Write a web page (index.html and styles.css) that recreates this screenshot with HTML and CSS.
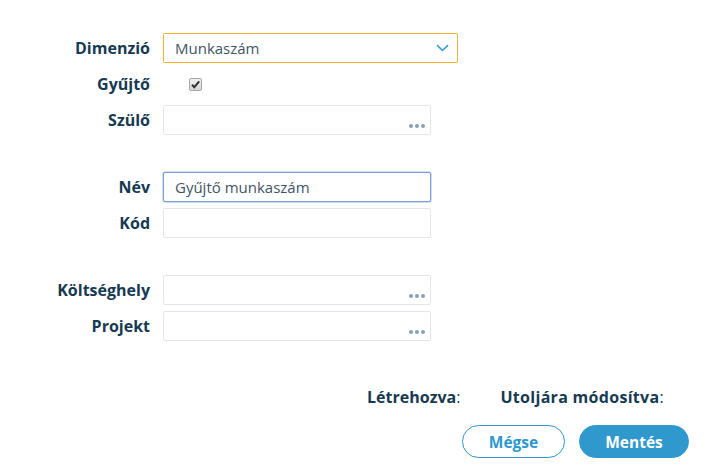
FILE: index.html
```html
<!DOCTYPE html>
<html lang="hu">
<head>
<meta charset="utf-8">
<title>Dimenzió</title>
<link rel="stylesheet" href="styles.css">
</head>
<body>
<div class="page">
  <form class="form">
    <div class="section">
      <label class="label">Dimenzió</label>
      <div class="field select">
        <span class="value">Munkaszám</span>
        <svg class="chevron" width="13" height="8" viewBox="0 0 13 8"><path d="M1 1.2 L6.5 6.5 L12 1.2" fill="none" stroke="#3a9bd5" stroke-width="1.6"/></svg>
      </div>
      <label class="label">Gyűjtő</label>
      <div class="check-cell">
        <span class="checkbox"><svg width="11" height="11" viewBox="0 0 11 11"><path d="M2 5.8 L4.3 8.2 L9.2 2.4" fill="none" stroke="#333" stroke-width="2"/></svg></span>
      </div>
      <label class="label">Szülő</label>
      <div class="field lookup"><span class="dots"><i></i><i></i><i></i></span></div>
    </div>

    <div class="section">
      <label class="label">Név</label>
      <div class="field focused"><span class="value">Gyűjtő munkaszám</span></div>
      <label class="label">Kód</label>
      <div class="field"></div>
    </div>

    <div class="section">
      <label class="label">Költséghely</label>
      <div class="field lookup"><span class="dots"><i></i><i></i><i></i></span></div>
      <label class="label">Projekt</label>
      <div class="field lookup"><span class="dots"><i></i><i></i><i></i></span></div>
    </div>
  </form>

  <div class="meta">
    <span class="meta-item"><b>Létrehozva</b>:</span>
    <span class="meta-item"><b>Utoljára módosítva</b>:</span>
  </div>

  <div class="actions">
    <button class="btn btn-outline" type="button">Mégse</button>
    <button class="btn btn-primary" type="button">Mentés</button>
  </div>
</div>
</body>
</html>
```

FILE: styles.css
```css
* { box-sizing: border-box; }
html, body {
  margin: 0;
  padding: 0;
  background: #ffffff;
}
body {
  font-family: "Open Sans", "Noto Sans", sans-serif;
  color: #163a52;
}
.page {
  width: 705px;
  height: 471px;
  padding-top: 33px;
}
.form {
  display: flex;
  flex-direction: column;
  gap: 37px;
}
.section {
  display: grid;
  grid-template-columns: 150px 295px;
  column-gap: 13px;
  row-gap: 6px;
  grid-auto-rows: 30px;
  align-items: center;
}
.label {
  text-align: right;
  font-weight: 700;
  font-size: 16px;
  color: #163a52;
  line-height: 30px;
}
.field {
  height: 30px;
  width: 268px;
  border: 1px solid #e2e6ea;
  border-radius: 2px;
  background: #fff;
  position: relative;
  display: flex;
  align-items: center;
  padding-left: 11px;
}
.value {
  font-size: 15px;
  color: #3f5566;
}
.select {
  width: 295px;
  border-color: #f2b230;
  justify-content: space-between;
  padding-right: 8px;
}
.focused {
  border-color: #7e9fd3;
  box-shadow: 0 0 0 0.5px #a8bfe4;
}
.check-cell {
  height: 30px;
  display: flex;
  align-items: center;
  padding-left: 26px;
}
.checkbox {
  width: 13px;
  height: 13px;
  border: 1px solid #a5a5a5;
  border-radius: 2px;
  background: linear-gradient(#f2f2f2, #d6d6d6);
  display: flex;
  align-items: center;
  justify-content: center;
}
.dots {
  position: absolute;
  right: 5px;
  bottom: 6px;
  display: flex;
  gap: 2px;
}
.dots i {
  width: 4px;
  height: 4px;
  border-radius: 50%;
  background: #8a9fb8;
  display: block;
}
.meta {
  display: flex;
  justify-content: flex-end;
  gap: 40px;
  padding-right: 41px;
  margin-top: 45px;
  font-size: 16px;
  line-height: 22px;
  color: #163a52;
}
.meta b { font-weight: 700; }
.meta-item:last-child { letter-spacing: 0.3px; }
.actions {
  display: flex;
  justify-content: flex-end;
  gap: 14px;
  padding-right: 16px;
  margin-top: 17px;
}
.btn {
  height: 33px;
  border-radius: 17px;
  font-family: "Open Sans", "Noto Sans", sans-serif;
  font-weight: 700;
  font-size: 15.5px;
  cursor: pointer;
}
.btn-outline {
  width: 103px;
  background: #fff;
  border: 1px solid #2e97cc;
  color: #2e97cc;
}
.btn-primary {
  width: 110px;
  background: #2f98cd;
  border: 1px solid #2f98cd;
  color: #fff;
}
```
